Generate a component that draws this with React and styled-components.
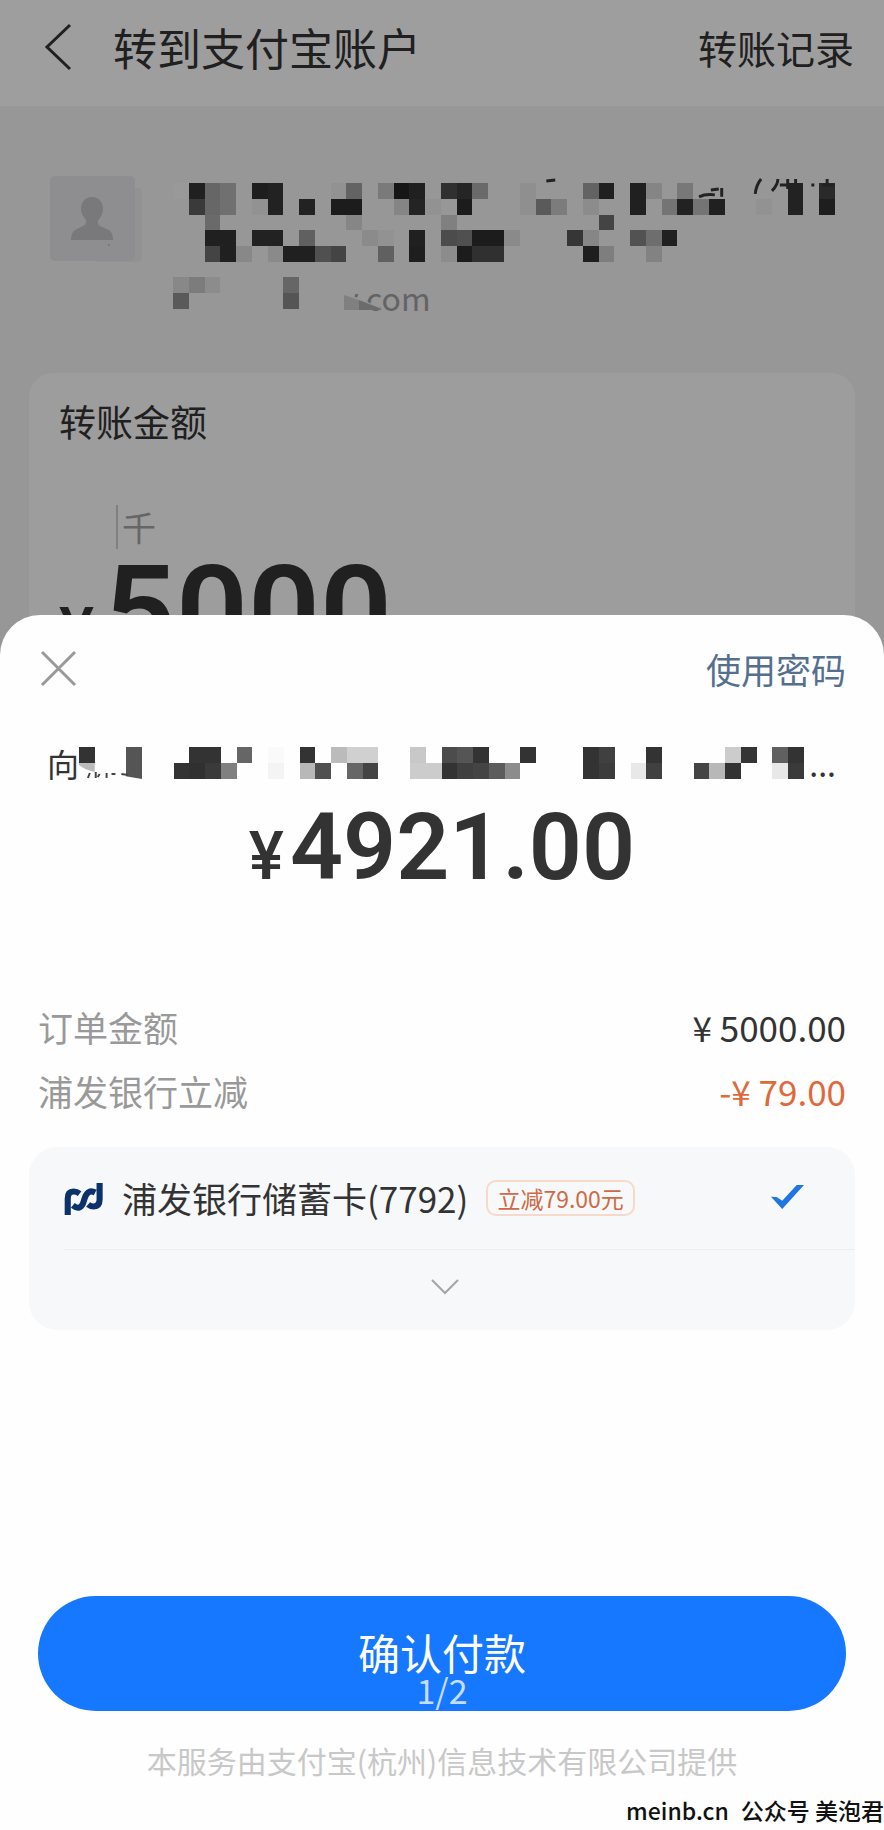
import React from 'react';
import styled, { createGlobalStyle } from 'styled-components';

/* --- DATA --- */
const CELL = 16;

// every entry is [column, shade], one list per row of cells
const nameCells = [
  [[0, '#999'], [1, '#202020'], [2, '#666'], [3, '#707070'], [5, '#1e1e1e'], [6, '#222'], [10, '#929292'], [11, '#636363'], [13, '#7a7a7a'], [14, '#161616'], [15, '#202020'], [17, '#303030'], [18, '#252525'], [19, '#6a6a6a'], [22, '#8f8f8f'], [26, '#636363'], [27, '#202020'], [29, '#202020'], [30, '#858585'], [32, '#787878'], [39, '#222'], [41, '#2a2a2a']],
  [[1, '#3a3a3a'], [2, '#676767'], [3, '#707070'], [5, '#929292'], [6, '#222'], [8, '#222'], [10, '#1c1c1c'], [11, '#1c1c1c'], [14, '#858585'], [15, '#242424'], [16, '#929292'], [18, '#1c1c1c'], [22, '#8f8f8f'], [23, '#5a5a5a'], [24, '#7c7c7c'], [26, '#8c8c8c'], [29, '#202020'], [31, '#747474'], [32, '#222'], [33, '#747474'], [34, '#202020'], [37, '#929292'], [39, '#222'], [41, '#1e1e1e']],
  [[2, '#6a6a6a'], [11, '#868686'], [17, '#808080'], [27, '#444']],
  [[2, '#202020'], [3, '#202020'], [5, '#222'], [6, '#222'], [8, '#606060'], [12, '#8b8b8b'], [13, '#929292'], [15, '#202020'], [17, '#4c4c4c'], [18, '#505050'], [19, '#1c1c1c'], [20, '#1c1c1c'], [21, '#8a8a8a'], [25, '#363636'], [26, '#868686'], [29, '#525252'], [30, '#6e6e6e'], [31, '#202020']],
  [[2, '#444'], [3, '#202020'], [4, '#888'], [6, '#8a8a8a'], [7, '#202020'], [8, '#202020'], [9, '#505050'], [10, '#444'], [13, '#606060'], [15, '#1e1e1e'], [17, '#8c8c8c'], [18, '#1c1c1c'], [19, '#303030'], [20, '#303030'], [26, '#1e1e1e'], [27, '#7e7e7e'], [30, '#828282']]
];

const mailCells = [
  [[0, '#888'], [1, '#7c7c7c'], [2, '#8c8c8c'], [7, '#666']],
  [[0, '#5a5a5a'], [7, '#555']]
];

const payeeCells = [
  [[0, '#333'], [3, '#555'], [7, '#333'], [8, '#333'], [10, '#666'], [12, '#fafafa'], [14, '#333'], [16, '#bbb'], [17, '#d0d0d0'], [18, '#d0d0d0'], [21, '#c8c8c8'], [23, '#4c4c4c'], [24, '#555'], [25, '#333'], [28, '#333'], [32, '#333'], [33, '#404040'], [36, '#333'], [41, '#ccc'], [42, '#353535'], [44, '#606060'], [45, '#333']],
  [[3, '#555'], [6, '#333'], [7, '#303030'], [8, '#3a3a3a'], [9, '#808080'], [12, '#f4f4f4'], [14, '#b8b8b8'], [15, '#505050'], [17, '#666'], [18, '#444'], [21, '#ccc'], [22, '#ccc'], [23, '#333'], [24, '#404040'], [25, '#444'], [26, '#5c5c5c'], [27, '#8c8c8c'], [32, '#333'], [33, '#3c3c3c'], [35, '#e8e8e8'], [36, '#404040'], [39, '#444'], [40, '#b8b8b8'], [41, '#333'], [44, '#e8e8e8'], [45, '#3a3a3a']]
];

const orderLines = [
  { label: '订单金额', value: '¥ 5000.00' },
  { label: '浦发银行立减', value: '-¥ 79.00', discount: true }
];

/* --- STYLES --- */
const GlobalStyle = createGlobalStyle`
  *, *::before, *::after {
    box-sizing: border-box;
  }

  body {
    margin: 0;
    background-color: #979797;
    color: #333;
    font-family: 'Noto Sans CJK SC', 'Noto Sans', sans-serif;
  }

  button {
    padding: 0;
    border: none;
    background: none;
    font-family: inherit;
    cursor: pointer;
  }

  a {
    text-decoration: none;
  }

  h1, h2, p, dl, dd {
    margin: 0;
    font-weight: 400;
  }

  svg {
    display: block;
  }
`;

const Screen = styled.div`
  display: flex;
  flex-direction: column;
  min-height: 100vh;
`;

const Header = styled.header`
  display: flex;
  align-items: center;
  height: 106px;
  padding: 0 30px 12px 44px;
  background-color: #9e9e9e;
`;

const Title = styled.h1`
  flex: 1;
  margin-left: 39px;
  font-size: 44px;
  line-height: 60px;
  color: #202020;
`;

const HistoryLink = styled.a`
  font-size: 39px;
  line-height: 60px;
  color: #202020;
`;

const Account = styled.section`
  display: flex;
  align-items: flex-start;
  padding: 70px 44px 56px 50px;
`;

const AccountText = styled.div`
  flex: 1;
  margin-left: 29px;
  padding-top: 7px;
`;

const MailRow = styled.div`
  display: flex;
  align-items: flex-start;
  height: 40px;
  margin-top: 15px;
`;

const Mail = styled.p`
  position: relative;
  margin-left: 43px;
  font-size: 32px;
  line-height: 40px;
  color: #636363;
`;

const MailSmudge = styled.svg`
  position: absolute;
  left: -6px;
  bottom: -6px;
`;

const AmountCard = styled.section`
  height: 284px;
  margin: 0 29px;
  padding: 22px 30px;
  border-radius: 24px 24px 0 0;
  background-color: #9d9d9d;
  color: #202020;
  overflow: hidden;
`;

const AmountLabel = styled.h2`
  font-size: 37px;
  line-height: 52px;
`;

const UnitHint = styled.p`
  width: 44px;
  margin: 58px 0 0 57px;
  padding-left: 4px;
  border-left: 2px solid #808080;
  font-size: 34px;
  line-height: 44px;
  color: #666;
`;

const Money = styled.p`
  display: flex;
  align-items: baseline;
  font-family: Roboto, 'Noto Sans CJK SC', sans-serif;
  font-size: ${props => props.$size}px;
  font-weight: 600;
  line-height: 1;
`;

const Currency = styled.span`
  margin-right: ${props => props.$gap}px;
  font-size: 66px;
  font-weight: 500;
`;

const Sheet = styled.main`
  position: relative;
  display: flex;
  flex: 1;
  flex-direction: column;
  margin-top: -42px;
  padding: 30px 38px 0;
  border-radius: 40px 40px 0 0;
  background-color: #fefefe;
`;

const SheetBar = styled.div`
  display: flex;
  align-items: center;
  justify-content: space-between;
  height: 48px;
`;

const PasswordButton = styled.button`
  font-size: 35px;
  line-height: 48px;
  color: #55708f;
`;

const Payee = styled.p`
  display: flex;
  align-items: center;
  margin: 46px 10px 0 9px;
  font-size: 32px;
  line-height: 48px;
`;

const PayeeMosaic = styled.div`
  flex: 1;
`;

const Total = styled.div`
  display: flex;
  align-items: center;
  justify-content: center;
  height: 120px;
`;

const OrderList = styled.dl`
  margin-top: 88px;
`;

const OrderLine = styled.div`
  display: flex;
  justify-content: space-between;
  font-size: 35px;
  line-height: 64px;

  dt {
    color: #999;
  }

  dd {
    color: ${props => (props.$discount ? '#e0693c' : '#333')};
  }
`;

const MethodCard = styled.section`
  margin: 24px -9px 0;
  padding-left: 35px;
  border-radius: 28px;
  background-color: #f6f8fa;
`;

const MethodLabel = styled.label`
  display: flex;
  align-items: center;
  height: 103px;
  padding-right: 51px;
  border-bottom: 1px solid #eceef0;
  cursor: pointer;
`;

const MethodName = styled.span`
  margin-left: 19px;
  font-size: 35px;
  line-height: 52px;
`;

const Tag = styled.span`
  margin-left: 18px;
  padding: 0 9px;
  border: 2px solid #f7d9cc;
  border-radius: 10px;
  font-size: 23px;
  line-height: 32px;
  color: #cf6a44;
`;

const CheckRadio = styled.input`
  width: 33px;
  height: 24px;
  margin: 0 0 2px auto;
  appearance: none;

  &:checked {
    background-color: #1f75e2;
    clip-path: polygon(0 49%, 17% 50%, 34% 66%, 78% 0, 100% 0, 34% 100%);
  }
`;

const ExpandButton = styled.button`
  display: flex;
  align-items: center;
  justify-content: center;
  width: 100%;
  height: 80px;
  padding: 0 29px 6px 0;
`;

const SheetFooter = styled.footer`
  margin-top: auto;
  text-align: center;
`;

const ConfirmButton = styled.button`
  display: flex;
  flex-direction: column;
  align-items: center;
  width: 100%;
  height: 115px;
  padding-top: 34px;
  border-radius: 58px;
  background-color: #1677ff;
  font-size: 42px;
  line-height: 44px;
  color: #fff;
`;

const PageCount = styled.span`
  font-size: 34px;
  line-height: 32px;
  color: #c5ddff;
`;

const Provider = styled.p`
  margin-top: 27px;
  font-size: 30px;
  line-height: 44px;
  color: #c8c8c8;
`;

const Credit = styled.p`
  display: flex;
  justify-content: flex-end;
  gap: 12px;
  margin: 10px -38px 0;
  padding-bottom: 2px;
  font-size: 23px;
  font-weight: 500;
  line-height: 36px;
  color: #111;
`;

/* --- ICONS & DRAWINGS --- */
const Mosaic = ({ rows, columns, children }) => (
  <svg
    viewBox={`0 0 ${columns * CELL} ${rows.length * CELL}`}
    width={Math.round(columns * 15.77)}
    height={Math.round(rows.length * 15.77)}
    preserveAspectRatio="none"
    shapeRendering="crispEdges"
    overflow="visible"
    aria-hidden="true"
  >
    {rows.map((row, y) =>
      row.map(([x, shade]) => (
        <rect
          key={`${x}-${y}`}
          x={x * CELL}
          y={y * CELL}
          width={CELL}
          height={CELL}
          fill={shade}
        />
      ))
    )}
    {children}
  </svg>
);

const BackIcon = () => (
  <svg width="30" height="48" viewBox="0 0 30 48" fill="none">
    <path d="M26 2 L3 24 L26 46" stroke="#202020" strokeWidth="3" />
  </svg>
);

const Avatar = () => (
  <svg width="94" height="88" viewBox="0 0 94 88">
    <path d="M78 12 h10 q4 0 4 4 v66 q0 4 -4 4 h-42 z" fill="#929293" />
    <rect width="85" height="85" rx="5" fill="#8e8e90" />
    <path
      d="M42 21 c7 0 11 5 11 12 c0 5 -3 9 -5 12 q-1 4 4 6 l7 3 q4 3 4 10 H21 q0 -7 4 -10 l8 -4 q4 -2 3 -6 c-2 -3 -5 -6 -5 -11 c0 -7 4 -12 11 -12 z"
      fill="#79797b"
    />
    <circle cx="59" cy="69" r="1" fill="#707072" />
  </svg>
);

const CloseIcon = () => (
  <svg width="40" height="40" viewBox="0 0 40 40" fill="none">
    <path d="M4 3 L37 36 M37 3 L4 36" stroke="#999" strokeWidth="3" />
  </svg>
);

const BankLogo = () => (
  <svg width="39" height="34" viewBox="0 -6 115 100" fill="none">
    <path
      d="M11 94 V46 Q11 25 28 25 Q38 25 46 31 M26 66 Q46 82 56 60 L62 42 Q71 17 92 28 M105 0 V48 Q105 69 88 69 Q78 69 71 63"
      stroke="#0b326b"
      strokeWidth="18"
    />
  </svg>
);

const ChevronIcon = () => (
  <svg width="28" height="17" viewBox="0 0 28 17" fill="none">
    <path d="M1 1 L14 14 L27 1" stroke="#a3a6a9" strokeWidth="2" />
  </svg>
);

/* --- COMPONENTS --- */
const TransferPage = () => (
  <>
    <Header>
      <button type="button" aria-label="返回">
        <BackIcon />
      </button>
      <Title>转到支付宝账户</Title>
      <HistoryLink href="#history">转账记录</HistoryLink>
    </Header>

    <Account>
      <Avatar />
      <AccountText>
        <Mosaic rows={nameCells} columns={42}>
          {/* strokes of the name that stick out above the cells */}
          <g stroke="#222" strokeWidth="3" fill="none" shapeRendering="auto">
            <path d="M379 -2 L388 -3 M534 14 Q540 11 550 12 M546 7 L554 6 M557 5 V14" />
            <path d="M591 11 Q592 2 597 -4 M608 8 Q614 2 614 -4 M616 2 H638 M624 -4 V6 M632 -4 V6 M648 2 H651 M659 2 H672 M664 -4 V2" />
          </g>
        </Mosaic>
        <MailRow>
          <Mosaic rows={mailCells} columns={8} />
          <Mail>
            y.com
            <MailSmudge width="52" height="32" viewBox="0 0 52 32">
              <path d="M0 0 L10 2 L48 18 V19 H34 V32 H0 Z" fill="#979797" />
              <path d="M8 4 L23 9 V19 H8 Z" fill="#808080" />
              <path d="M23 9 L46 18 L44 19 H23 Z" fill="#6c6c6c" />
            </MailSmudge>
          </Mail>
        </MailRow>
      </AccountText>
    </Account>

    <AmountCard>
      <AmountLabel>转账金额</AmountLabel>
      <UnitHint>千</UnitHint>
      <Money $size={126}>
        <Currency $gap={10}>¥</Currency>
        5000
      </Money>
    </AmountCard>
  </>
);

const PaymentSheet = () => (
  <Sheet>
    <SheetBar>
      <button type="button" aria-label="关闭">
        <CloseIcon />
      </button>
      <PasswordButton type="button">使用密码</PasswordButton>
    </SheetBar>

    <Payee>
      向
      <PayeeMosaic>
        <Mosaic rows={payeeCells} columns={46}>
          <g shapeRendering="auto">
            <path d="M0 16 H16 V25 Q6 23 0 18 Z" fill="#bbb" />
            <path
              d="M11 26 L9 31 M17 25 V31 M21 27 L19 30 M28 26 V31 M33 27 H37 M43 27 L50 28"
              stroke="#444"
              strokeWidth="2"
            />
            <path d="M46 29 L64 32 V34 H46 Z" fill="#fefefe" />
          </g>
        </Mosaic>
      </PayeeMosaic>
      ...
    </Payee>

    <Total>
      <Money $size={93}>
        <Currency $gap={6}>¥</Currency>
        4921.00
      </Money>
    </Total>

    <OrderList>
      {orderLines.map(({ label, value, discount }) => (
        <OrderLine key={label} $discount={discount}>
          <dt>{label}</dt>
          <dd>{value}</dd>
        </OrderLine>
      ))}
    </OrderList>

    <MethodCard>
      <MethodLabel htmlFor="method-spdb">
        <BankLogo />
        <MethodName>浦发银行储蓄卡(7792)</MethodName>
        <Tag>立减79.00元</Tag>
        <CheckRadio type="radio" id="method-spdb" name="method" defaultChecked />
      </MethodLabel>
      <ExpandButton type="button" aria-label="展开">
        <ChevronIcon />
      </ExpandButton>
    </MethodCard>

    <SheetFooter>
      <ConfirmButton type="button">
        确认付款
        <PageCount>1/2</PageCount>
      </ConfirmButton>
      <Provider>本服务由支付宝(杭州)信息技术有限公司提供</Provider>
      <Credit>
        <span>meinb.cn</span>
        <span>公众号 美泡君</span>
      </Credit>
    </SheetFooter>
  </Sheet>
);

const App = () => (
  <Screen>
    <GlobalStyle />
    <TransferPage />
    <PaymentSheet />
  </Screen>
);

export default App;
